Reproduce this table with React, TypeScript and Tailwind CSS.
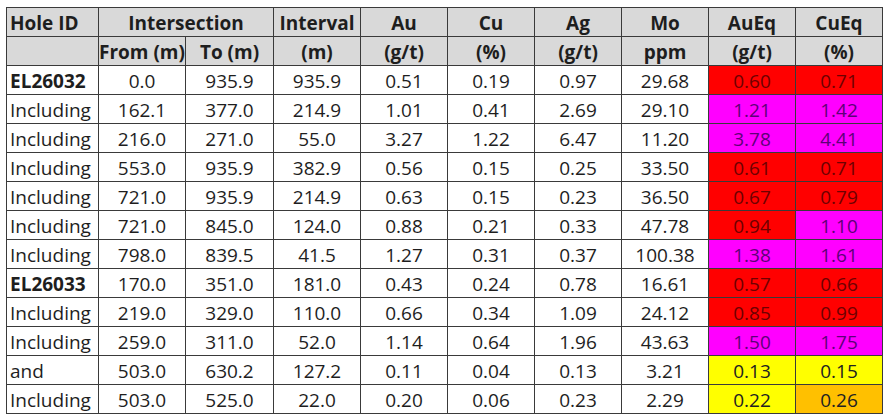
type Tone = "red" | "pink" | "yellow" | "orange";

type Row = {
  hole: string;
  bold?: boolean;
  vals: string[];
  au: [string, Tone];
  cu: [string, Tone];
};

const rows: Row[] = [
  { hole: "EL26032", bold: true, vals: ["0.0", "935.9", "935.9", "0.51", "0.19", "0.97", "29.68"], au: ["0.60", "red"], cu: ["0.71", "red"] },
  { hole: "Including", vals: ["162.1", "377.0", "214.9", "1.01", "0.41", "2.69", "29.10"], au: ["1.21", "pink"], cu: ["1.42", "pink"] },
  { hole: "Including", vals: ["216.0", "271.0", "55.0", "3.27", "1.22", "6.47", "11.20"], au: ["3.78", "pink"], cu: ["4.41", "pink"] },
  { hole: "Including", vals: ["553.0", "935.9", "382.9", "0.56", "0.15", "0.25", "33.50"], au: ["0.61", "red"], cu: ["0.71", "red"] },
  { hole: "Including", vals: ["721.0", "935.9", "214.9", "0.63", "0.15", "0.23", "36.50"], au: ["0.67", "red"], cu: ["0.79", "red"] },
  { hole: "Including", vals: ["721.0", "845.0", "124.0", "0.88", "0.21", "0.33", "47.78"], au: ["0.94", "red"], cu: ["1.10", "pink"] },
  { hole: "Including", vals: ["798.0", "839.5", "41.5", "1.27", "0.31", "0.37", "100.38"], au: ["1.38", "pink"], cu: ["1.61", "pink"] },
  { hole: "EL26033", bold: true, vals: ["170.0", "351.0", "181.0", "0.43", "0.24", "0.78", "16.61"], au: ["0.57", "red"], cu: ["0.66", "red"] },
  { hole: "Including", vals: ["219.0", "329.0", "110.0", "0.66", "0.34", "1.09", "24.12"], au: ["0.85", "red"], cu: ["0.99", "red"] },
  { hole: "Including", vals: ["259.0", "311.0", "52.0", "1.14", "0.64", "1.96", "43.63"], au: ["1.50", "pink"], cu: ["1.75", "pink"] },
  { hole: "and", vals: ["503.0", "630.2", "127.2", "0.11", "0.04", "0.13", "3.21"], au: ["0.13", "yellow"], cu: ["0.15", "yellow"] },
  { hole: "Including", vals: ["503.0", "525.0", "22.0", "0.20", "0.06", "0.23", "2.29"], au: ["0.22", "yellow"], cu: ["0.26", "orange"] },
];

const tones: Record<Tone, string> = {
  red: "bg-[#ff0000] text-[#6e0000]",
  pink: "bg-[#ff00ff] text-[#5e0078]",
  yellow: "bg-[#ffff00] text-[#222]",
  orange: "bg-[#ffc000] text-[#222]",
};

const cell = "border border-[#3a3a3a] h-[29px] p-0 pt-[2px] leading-[26px]";
const head = `${cell} bg-[#d9d9d9] font-bold text-center`;

export default function App() {
  return (
    <div
      className="bg-white w-[888px] h-[418px] pt-[7px] pl-[6px] text-[19px] text-[#1e1e1e]"
      style={{ fontFamily: '"Open Sans", "Liberation Sans", sans-serif' }}
    >
      <table className="table-fixed border-collapse w-[877px]">
        <colgroup>
          <col className="w-[92px]" />
          <col className="w-[87px]" />
          <col className="w-[88px]" />
          <col className="w-[87px]" />
          <col className="w-[87px]" />
          <col className="w-[87px]" />
          <col className="w-[87px]" />
          <col className="w-[87px]" />
          <col className="w-[87px]" />
          <col className="w-[87px]" />
        </colgroup>
        <thead>
          <tr>
            <th className={`${head} text-left pl-[3px]`}>Hole ID</th>
            <th className={head} colSpan={2}>Intersection</th>
            <th className={head}>Interval</th>
            <th className={head}>Au</th>
            <th className={head}>Cu</th>
            <th className={head}>Ag</th>
            <th className={head}>Mo</th>
            <th className={head}>AuEq</th>
            <th className={head}>CuEq</th>
          </tr>
          <tr>
            <th className={head}></th>
            <th className={head}>From (m)</th>
            <th className={head}>To (m)</th>
            <th className={head}>(m)</th>
            <th className={head}>(g/t)</th>
            <th className={head}>(%)</th>
            <th className={head}>(g/t)</th>
            <th className={head}>ppm</th>
            <th className={head}>(g/t)</th>
            <th className={head}>(%)</th>
          </tr>
        </thead>
        <tbody>
          {rows.map((r, i) => (
            <tr key={i}>
              <td className={`${cell} pl-[3px] whitespace-nowrap ${r.bold ? "font-bold" : ""}`}>{r.hole}</td>
              {r.vals.map((v, j) => (
                <td key={j} className={`${cell} text-center`}>
                  {v}
                </td>
              ))}
              <td className={`${cell} text-center ${tones[r.au[1]]}`}>{r.au[0]}</td>
              <td className={`${cell} text-center ${tones[r.cu[1]]}`}>{r.cu[0]}</td>
            </tr>
          ))}
        </tbody>
      </table>
    </div>
  );
}
